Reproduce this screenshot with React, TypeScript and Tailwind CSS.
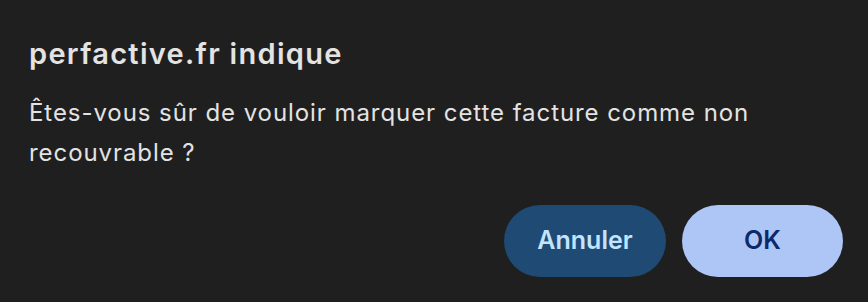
export default function App() {
  return (
    <div
      className="w-[868px] h-[302px] bg-[#1f1f1f] text-[#e3e3e3] flex flex-col px-[29px] pt-[36px]"
      style={{ fontFamily: "Inter, 'Noto Sans', sans-serif" }}
    >
      <h1 className="text-[29px] leading-[36px] font-semibold tracking-[1.3px]">perfactive.fr indique</h1>
      <p className="mt-[21px] text-[24px] leading-[40px] tracking-[0.93px] w-[780px]">
        Êtes-vous sûr de vouloir marquer cette facture comme non recouvrable ?
      </p>
      <div className="flex justify-end gap-4 mt-[32px] -mr-[4px]">
        <button className="w-[162px] h-[72px] rounded-full bg-[#1f4a73] text-[#c2e4ff] text-[25px] font-semibold">
          Annuler
        </button>
        <button className="w-[161px] h-[72px] rounded-full bg-[#aec6f6] text-[#0b2a6a] text-[25px] font-semibold">
          OK
        </button>
      </div>
    </div>
  );
}
